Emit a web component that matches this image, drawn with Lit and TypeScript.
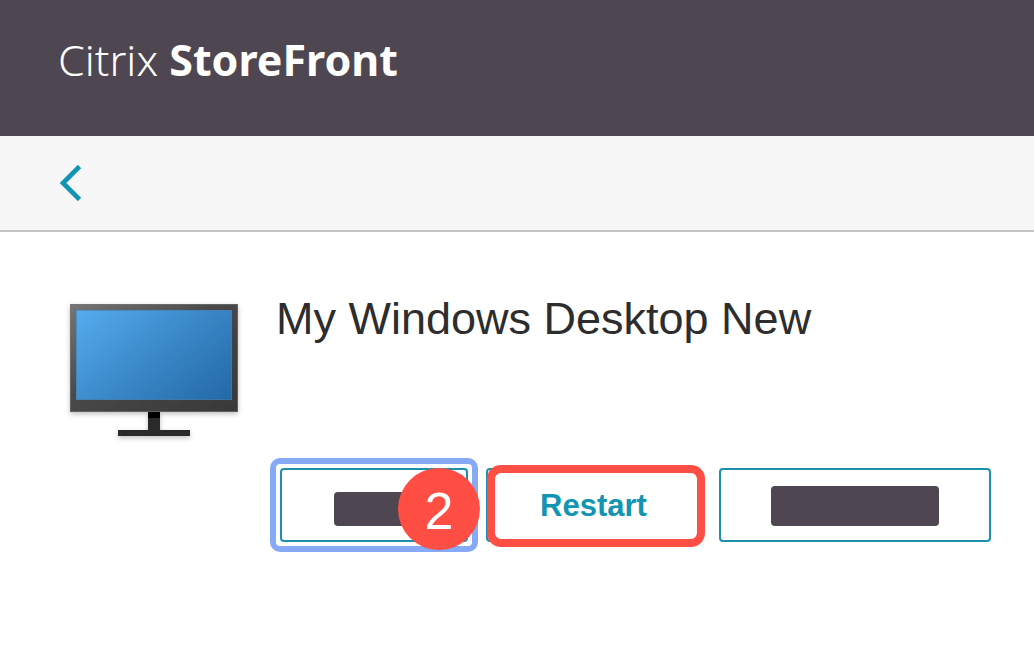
import { LitElement, html, css } from "lit";
import { customElement } from "lit/decorators.js";

@customElement("desktop-icon")
class DesktopIcon extends LitElement {
  static styles = css`
    :host {
      display: block;
      flex: none;
    }
    .art {
      display: block;
      width: 192px;
      height: 152px;
    }
  `;

  render() {
    return html`
      <svg class="art" viewBox="0 0 192 152" aria-hidden="true">
        <defs>
          <linearGradient id="frame" x1="0" y1="0" x2="1" y2="1">
            <stop offset="0" stop-color="#767676" />
            <stop offset="0.45" stop-color="#484848" />
            <stop offset="1" stop-color="#383838" />
          </linearGradient>
          <linearGradient id="screen" x1="0" y1="0" x2="110" y2="130" gradientUnits="userSpaceOnUse">
            <stop offset="0" stop-color="#55acef" />
            <stop offset="0.5" stop-color="#3a88c8" />
            <stop offset="1" stop-color="#2368a5" />
          </linearGradient>
          <filter id="shade" x="-10%" y="-10%" width="120%" height="125%">
            <feDropShadow dx="0" dy="2" stdDeviation="2.5" flood-color="#000" flood-opacity="0.25" />
          </filter>
        </defs>
        <g filter="url(#shade)">
          <rect x="90" y="120" width="12" height="22" fill="#2c2c2c" />
          <rect x="90" y="120" width="12" height="6" fill="#000" />
          <rect x="60" y="138" width="72" height="6" fill="#2c2c2c" />
          <rect x="12" y="12" width="168" height="108" fill="url(#frame)" />
          <rect x="12.5" y="12.5" width="167" height="107" fill="none" stroke="#777" stroke-opacity="0.6" />
        </g>
        <rect x="0" y="0" width="156" height="90" transform="translate(18 18)" fill="url(#screen)" />
        <rect x="18.5" y="18.5" width="155" height="89" fill="none" stroke="#4b7ba3" stroke-opacity="0.6" />
      </svg>
    `;
  }
}

@customElement("app-root")
class AppRoot extends LitElement {
  static styles = css`
    :host {
      display: block;
      min-height: 100vh;
      background: #fff;
      color: #2d2d2d;
      font-family: "Liberation Sans", Arial, sans-serif;
    }
    .banner {
      box-sizing: border-box;
      height: 136px;
      padding: 30px 58px;
      background: #4e4650;
      color: #fff;
      font-family: "Noto Sans", sans-serif;
      font-size: 43px;
      font-weight: 300;
      line-height: 60px;
    }
    .banner strong {
      font-weight: 700;
    }
    .toolbar {
      display: flex;
      align-items: center;
      height: 94px;
      padding: 0 58px;
      background: #f7f7f7;
      border-bottom: 2px solid #c4c4c4;
    }
    .back {
      padding: 0;
      border: 0;
      background: none;
      cursor: pointer;
    }
    .back svg {
      display: block;
      width: 26px;
      height: 40px;
    }
    .details {
      display: flex;
      gap: 26px;
      padding: 60px 43px 60px 58px;
    }
    .info {
      flex: 1;
      min-width: 0;
    }
    h1 {
      margin: 0 0 122px;
      font-size: 45px;
      font-weight: 400;
      line-height: 54px;
    }
    .actions {
      display: flex;
      gap: 18px;
      padding-left: 4px;
    }
    .action {
      position: relative;
      box-sizing: border-box;
      display: flex;
      justify-content: center;
      align-items: flex-end;
      flex: 188 1 188px;
      height: 74px;
      padding: 0 0 14px;
      border: 2px solid #1b91aa;
      border-radius: 4px;
      background: #fff;
      color: #1295b2;
      font: 700 31px/40px "Liberation Sans", Arial, sans-serif;
      cursor: pointer;
    }
    .middle {
      flex: 215 1 215px;
    }
    .last {
      flex: 272 1 272px;
    }
    .focused::before {
      content: "";
      position: absolute;
      inset: -12px;
      border: 6px solid #86a9f8;
      border-radius: 10px;
    }
    .mask {
      width: 80px;
      height: 34px;
      border-radius: 4px;
      background: #4e4650;
    }
    .wide {
      width: 168px;
      height: 40px;
    }
    .highlight {
      position: absolute;
      inset: -5px -6px -7px -1px;
      border: 8px solid #ff4f44;
      border-radius: 14px;
      pointer-events: none;
    }
    .step {
      position: absolute;
      top: -2px;
      right: -14px;
      z-index: 1;
      width: 82px;
      height: 82px;
      border-radius: 50%;
      background: #ff4f44;
      color: #fff;
      font-size: 52px;
      font-weight: 400;
      line-height: 86px;
      text-align: center;
    }
  `;

  render() {
    return html`
      <header class="banner">Citrix <strong>StoreFront</strong></header>
      <nav class="toolbar">
        <button class="back" aria-label="Back">
          <svg viewBox="0 0 26 40" fill="none" stroke="#1295b2" stroke-width="4.6">
            <path d="M21.5 3.5 5 20 21.5 36.5" />
          </svg>
        </button>
      </nav>
      <main class="details">
        <desktop-icon></desktop-icon>
        <section class="info">
          <h1>My Windows Desktop New</h1>
          <div class="actions">
            <button class="action focused" aria-label="Open">
              <span class="mask"></span>
              <span class="step">2</span>
            </button>
            <button class="action middle">
              Restart
              <span class="highlight"></span>
            </button>
            <button class="action last" aria-label="More">
              <span class="mask wide"></span>
            </button>
          </div>
        </section>
      </main>
    `;
  }
}
